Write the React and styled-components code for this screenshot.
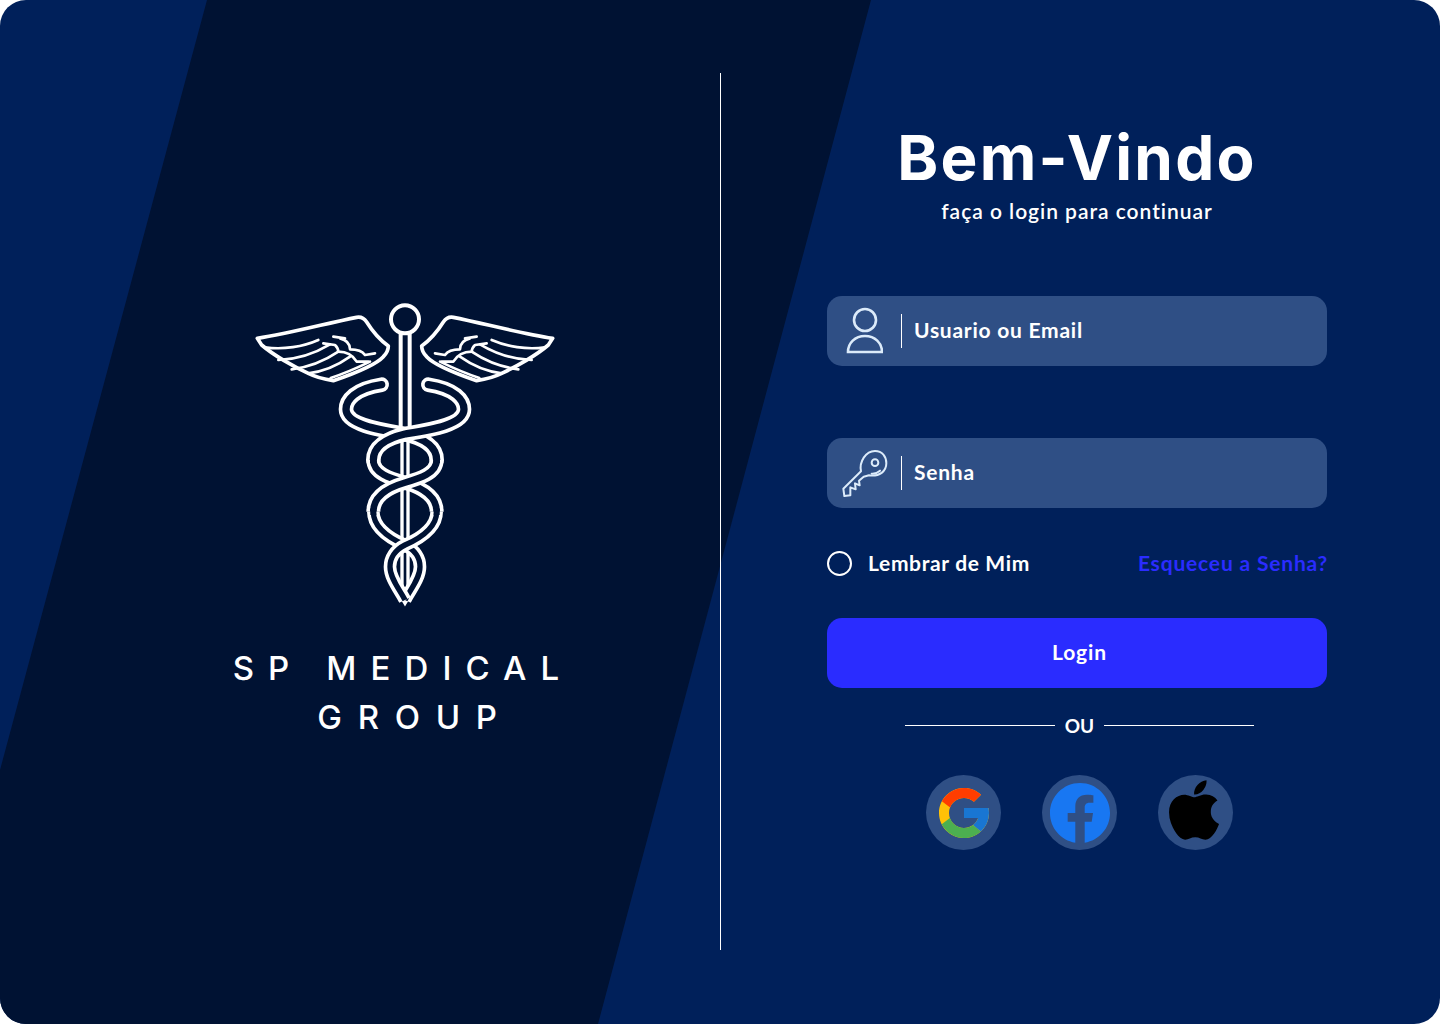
import React from 'react';
import styled, { createGlobalStyle } from 'styled-components';
import { FcGoogle } from 'react-icons/fc';
import { FaFacebook, FaApple } from 'react-icons/fa';

const NAVY = '#00205a';
const DARK = '#001233';
const CHIP = '#2f4f85';
const BLUE = '#2a2cff';

const GlobalStyle = createGlobalStyle`
  html, body {
    margin: 0;
    background: #fff;
  }
  * {
    box-sizing: border-box;
  }
`;

const Card = styled.div`
  position: relative;
  width: 1440px;
  height: 1024px;
  border-radius: 26px;
  overflow: hidden;
  background: ${NAVY};
  display: grid;
  grid-template-columns: 720px 1px 719px;
  font-family: Lato, "Noto Sans", sans-serif;
  color: #fff;

  &::before {
    content: '';
    position: absolute;
    inset: 0;
    background: ${DARK};
    clip-path: polygon(207px 0, 871px 0, 598px 100%, 0 100%, 0 770px);
  }
`;

const BrandPanel = styled.section`
  position: relative;
  padding: 304px 0 0 90px;
  display: flex;
  flex-direction: column;
  align-items: center;
`;

const Logo = styled.svg`
  width: 330px;
  height: 330px;
  margin-top: -14px;
  flex: none;
  filter: blur(0.5px);
`;

const BrandName = styled.h2`
  margin: 24px 0 0;
  font-family: Inter, sans-serif;
  font-size: 33px;
  line-height: 49px;
  font-weight: 500;
  text-align: center;
`;

const BrandLine = styled.span`
  display: block;
  letter-spacing: ${props => props.$spacing}px;
  padding: 0 ${props => props.$right || 0}px 0 ${props => props.$left || 0}px;
`;

const Rule = styled.div`
  position: relative;
  margin: 73px 0 74px;
  background: #fff;
`;

const FormPanel = styled.section`
  position: relative;
  padding: 121px 0 0 106px;
`;

const Form = styled.div`
  width: 500px;
  display: flex;
  flex-direction: column;
`;

const Title = styled.h1`
  margin: 0;
  text-align: center;
  font-family: Inter, sans-serif;
  font-size: 62px;
  line-height: 74px;
  font-weight: 700;
  letter-spacing: 2.2px;
`;

const Subtitle = styled.p`
  margin: 3px 0 0;
  text-align: center;
  font-size: 21px;
  line-height: 26px;
  font-weight: 600;
  letter-spacing: 0.97px;
`;

const Field = styled.div`
  height: 70px;
  margin-top: ${props => props.$top}px;
  border-radius: 15px;
  background: ${CHIP};
  display: flex;
  align-items: center;
`;

const FieldIcon = styled.span`
  width: 74px;
  height: 100%;
  flex: none;
  display: flex;
  align-items: center;
  justify-content: center;
`;

const FieldLabel = styled.span`
  height: 34px;
  padding-left: 12px;
  border-left: 1px solid #fff;
  font-size: 21px;
  line-height: 32px;
  font-weight: 700;
  letter-spacing: 0.75px;
`;

const OptionsRow = styled.div`
  margin-top: 41px;
  height: 26px;
  display: flex;
  align-items: center;
  justify-content: space-between;
  font-size: 21px;
  font-weight: 700;
`;

const Remember = styled.label`
  display: flex;
  align-items: center;
  gap: 16px;
  letter-spacing: 0.65px;
`;

const Radio = styled.span`
  width: 25px;
  height: 25px;
  margin-top: 2px;
  border: 2px solid #fff;
  border-radius: 50%;
`;

const ForgotLink = styled.a`
  margin-right: -1px;
  color: ${BLUE};
  letter-spacing: 0.82px;
`;

const LoginButton = styled.button`
  margin-top: 43px;
  height: 70px;
  padding: 0 0 3px 5px;
  border: 0;
  border-radius: 15px;
  background: ${BLUE};
  color: #fff;
  font-family: inherit;
  font-size: 21px;
  font-weight: 700;
  letter-spacing: 0.9px;
`;

const OrRow = styled.div`
  margin-top: 25px;
  height: 24px;
  padding-left: 5px;
  display: flex;
  align-items: center;
  justify-content: center;
  gap: 10px;
  font-size: 19px;
  font-weight: 700;

  &::before,
  &::after {
    content: '';
    width: 150px;
    height: 1px;
    background: #fff;
  }
`;

const SocialRow = styled.div`
  margin-top: 38px;
  padding-left: 5px;
  display: flex;
  justify-content: center;
  gap: 41px;
`;

const SocialButton = styled.span`
  width: 75px;
  height: 75px;
  border-radius: 50%;
  background: ${CHIP};
  display: flex;
  align-items: center;
  justify-content: center;
  color: ${props => props.$color};
  padding: 0 ${props => props.$right || 0}px ${props => props.$lift || 0}px 0;

  svg {
    flex: none;
  }
`;

// snake is built of tube pieces, painted in this order so the crossings overlap
const tubes = [
  { d: 'M425 284 C345 296 318 330 318 358 C318 405 420 420 495 432 C550 445 590 470 590 510', w: 44 },
  { d: 'M565 284 C645 296 672 330 672 358 C672 405 570 420 495 432 C440 445 400 470 400 510', w: 44 },
  { d: 'M400 510 C400 550 450 565 495 578 C540 591 590 615 590 665', w: 42 },
  { d: 'M590 510 C590 550 540 565 495 578 C450 591 400 615 400 665', w: 42 },
  { d: 'M400 665 C400 715 450 745 495 765 C525 780 540 805 540 830 C540 865 510 900 495 930', w: 38 },
  { d: 'M590 665 C590 715 540 745 495 765 C465 780 450 805 450 830 C450 865 480 900 495 930', w: 38 },
];

// covers the hairline left where two tube pieces meet
const joints = [
  { d: 'M400 500 V520', w: 20 },
  { d: 'M590 500 V520', w: 20 },
  { d: 'M400 655 V675', w: 18 },
  { d: 'M590 655 V675', w: 18 },
];

function Wing() {
  return (
    <g fill="none" stroke="#fff" strokeLinecap="round" strokeLinejoin="round">
      <path strokeWidth="11" d="M52 145 C150 130 260 100 350 82 C362 80 372 84 380 96 C398 125 420 150 445 168 C445 180 440 190 430 200 C410 222 350 248 280 272 C255 268 225 260 205 250 C160 230 100 195 65 165 Z" />
      <path strokeWidth="8" d="M75 172 C130 180 190 170 235 150" />
      <path strokeWidth="8" d="M115 210 C170 208 225 190 270 163" />
      <path strokeWidth="8" d="M155 238 C205 232 255 212 295 185" />
      <path strokeWidth="8" d="M205 250 C250 245 295 225 330 200" />
      <path strokeWidth="8" d="M272 264 C315 250 355 232 390 215" />
      <path strokeWidth="8" d="M280 140 L315 145 M300 145 C320 150 330 160 330 178 C345 178 365 180 375 195 L405 190" />
      <path strokeWidth="8" d="M250 160 L285 165 C292 172 295 178 295 185 C315 185 335 190 350 215 L385 215" />
    </g>
  );
}

function Caduceus() {
  return (
    <Logo viewBox="0 0 990 990">
      <g fill="none" stroke="#fff">
        <circle cx="495" cy="88" r="42" strokeWidth="12" />
        <path strokeWidth="12" d="M482 128 V440 M509 128 V440" />
        <path strokeWidth="10" d="M486 440 V925 L495 940 L504 925 V440" />
      </g>
      <Wing />
      <g transform="translate(990 0) scale(-1 1)">
        <Wing />
      </g>
      <g fill="none">
        {tubes.map((t, i) => (
          <g key={i} strokeLinecap={i < 2 ? 'round' : 'butt'}>
            <path d={t.d} stroke="#fff" strokeWidth={t.w} />
            <path d={t.d} stroke={DARK} strokeWidth={t.w - 22} />
          </g>
        ))}
        {joints.map((j, i) => (
          <path key={i} d={j.d} stroke={DARK} strokeWidth={j.w} />
        ))}
      </g>
    </Logo>
  );
}

function UserIcon() {
  return (
    <svg width="38" height="48" viewBox="0 0 38 48" fill="none" stroke="#dcebfa" strokeWidth="2.6">
      <circle cx="20" cy="13" r="11" />
      <path d="M3 45 C3 36 10 29 20 29 C30 29 37 36 37 45 Z" />
    </svg>
  );
}

const KeySvg = styled.svg`
  transform: translate(1px, 1px);
`;

function KeyIcon() {
  return (
    <KeySvg width="60" height="56" viewBox="0 0 180 168" fill="none" stroke="#dcebfa" strokeWidth="6" strokeLinejoin="round" strokeLinecap="round">
      <path d="M25 128 L78 76 C72 48 92 15 120 15 C142 15 154 32 154 52 C154 76 134 92 102 88 L86 92 L72 104 L74 118 L60 112 L62 130 L46 124 L46 148 L28 150 Z" />
      <circle cx="120" cy="50" r="10" />
      <path d="M110 83 C120 84 128 80 135 74" />
    </KeySvg>
  );
}

function App() {
  return (
    <Card>
      <GlobalStyle />
      <BrandPanel>
        <Caduceus />
        <BrandName>
          <BrandLine $spacing={14.1} $right={4}>SP MEDICAL</BrandLine>
          <BrandLine $spacing={15.7} $left={20}>GROUP</BrandLine>
        </BrandName>
      </BrandPanel>
      <Rule />
      <FormPanel>
        <Form>
          <Title>Bem-Vindo</Title>
          <Subtitle>faça o login para continuar</Subtitle>
          <Field $top={72}>
            <FieldIcon><UserIcon /></FieldIcon>
            <FieldLabel>Usuario ou Email</FieldLabel>
          </Field>
          <Field $top={72}>
            <FieldIcon><KeyIcon /></FieldIcon>
            <FieldLabel>Senha</FieldLabel>
          </Field>
          <OptionsRow>
            <Remember><Radio />Lembrar de Mim</Remember>
            <ForgotLink>Esqueceu a Senha?</ForgotLink>
          </OptionsRow>
          <LoginButton>Login</LoginButton>
          <OrRow>OU</OrRow>
          <SocialRow>
            <SocialButton><FcGoogle size={60} /></SocialButton>
            <SocialButton $color="#1877f2"><FaFacebook size={62} /></SocialButton>
            <SocialButton $color="#000" $lift={6} $right={4}><FaApple size={68} /></SocialButton>
          </SocialRow>
        </Form>
      </FormPanel>
    </Card>
  );
}

export default App;
